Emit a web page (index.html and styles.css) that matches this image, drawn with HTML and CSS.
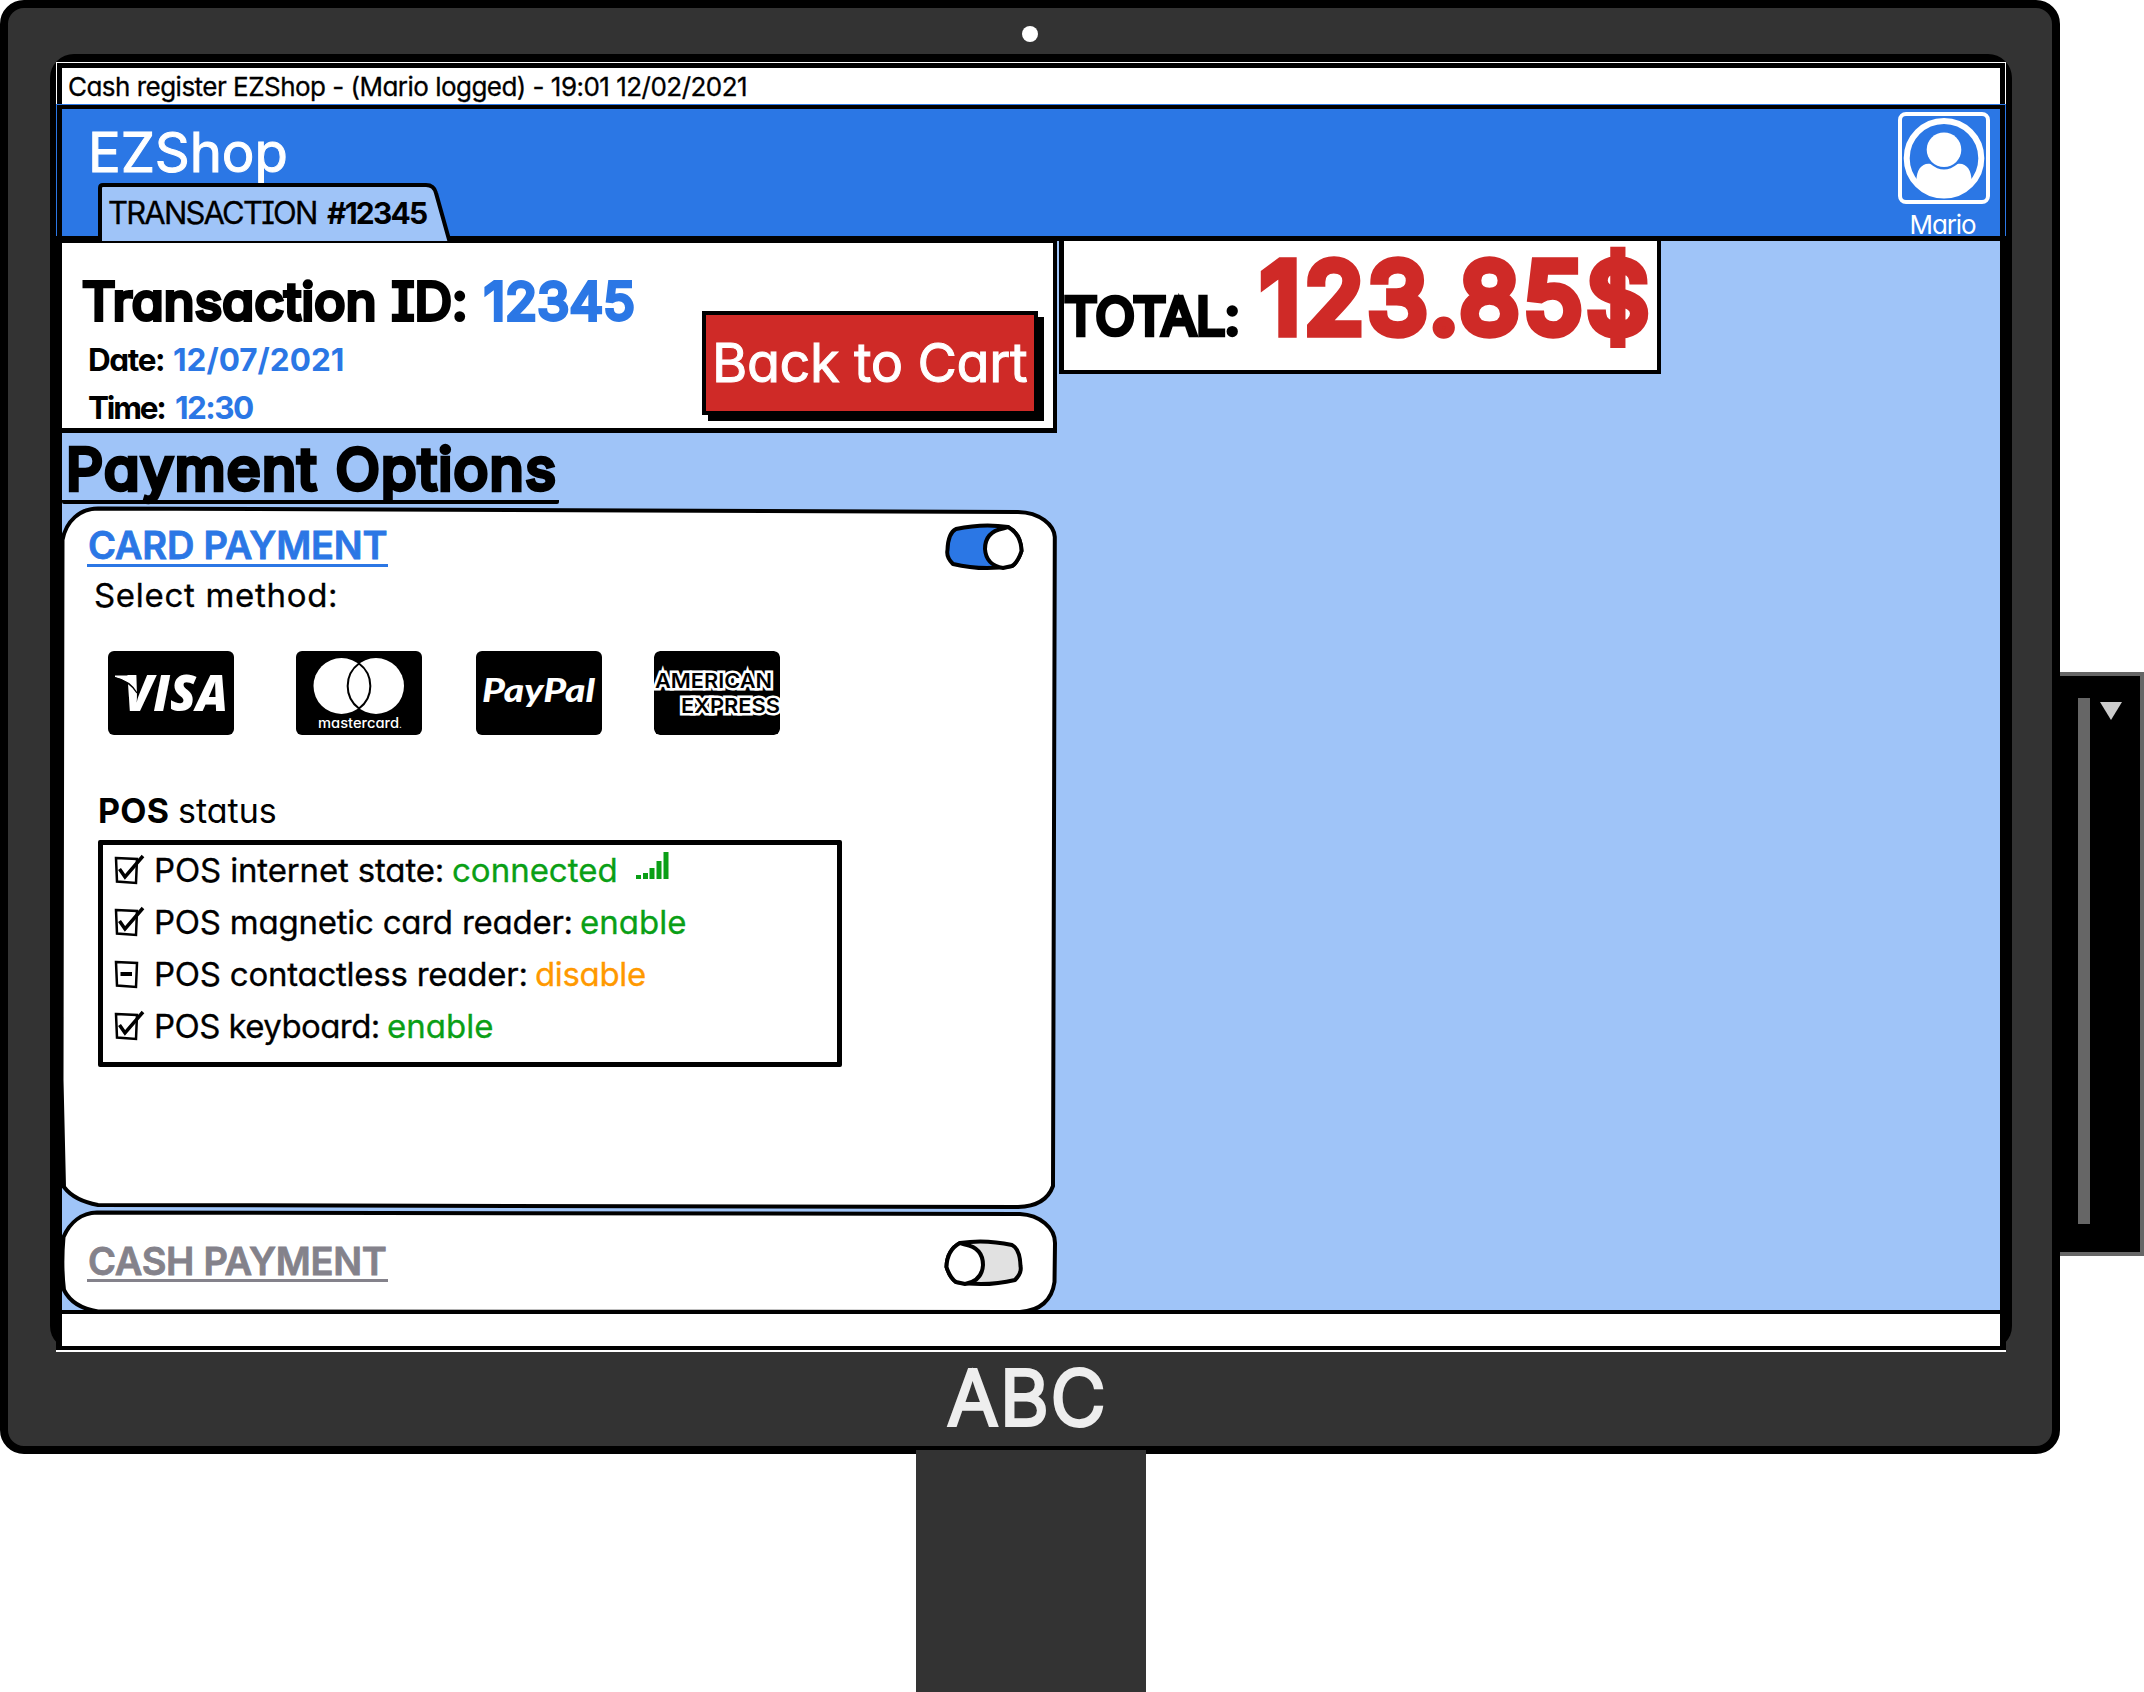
FILE: index.html
```
<!DOCTYPE html>
<html lang="en">
<head>
<meta charset="utf-8">
<title>EZShop cash register</title>
<link rel="stylesheet" href="styles.css">
</head>
<body>
<div class="station">
  <div class="monitor">
    <div class="camera-strip"><span class="camera"></span></div>
    <div class="bezel">
      <div class="screen">
        <div class="title-bar"><span class="t title">Cash register EZShop - (Mario logged) - 19:01 12/02/2021</span></div>
        <header class="header">
          <div class="brand-area">
            <div class="t brand">EZShop</div>
            <div class="tab">
              <svg class="tab-shape" width="356" height="58" viewBox="0 0 356 58"><path d="M2 60V5Q2 2 5 2H328Q336 2 338 10L352 60" fill="#9fc4f8" stroke="#000" stroke-width="4"/></svg>
              <span class="t tab-label">TRANSACTION</span><span class="t tab-number">#12345</span>
            </div>
          </div>
          <div class="user">
            <svg class="avatar" width="92" height="92" viewBox="0 0 92 92" fill="#fff"><rect x="2" y="2" width="88" height="88" rx="6" fill="none" stroke="#fff" stroke-width="4"/><circle cx="46" cy="46.3" r="37.3" fill="none" stroke="#fff" stroke-width="6"/><circle cx="46" cy="37.7" r="17.3"/><path d="M18.500 70C18 58 24 50.500 32.500 52Q46 63 59.500 52C68 50.500 74 58 73.500 70A37 37 0 0 1 18.500 70Z"/></svg>
            <div class="t user-name">Mario</div>
          </div>
        </header>
        <main class="main">
          <div class="left">
            <section class="transaction">
              <div class="info">
                <div class="id-line"><span class="t id-label">Transaction ID:</span><span class="t id-value">12345</span></div>
                <div class="meta-line"><span class="t date-label">Date:</span><span class="t date-value">12/07/2021</span></div>
                <div class="meta-line"><span class="t time-label">Time:</span><span class="t time-value">12:30</span></div>
              </div>
              <button class="back"><span class="t back-label">Back to Cart</span></button>
            </section>
            <h2 class="options-title"><span class="t options-text">Payment Options</span></h2>
            <section class="card-panel">
              <svg class="outline" width="1000" height="708" viewBox="60 505 1000 708"><path d="M98 508.500L1018 512C1040 512.500 1054 525 1054.800 537L1053 1186C1048 1200 1035 1206.500 1018 1207L98 1205C82 1202 70 1195 64 1187L61.500 1080L62.500 540C66 521 80 508.500 98 508.500Z" fill="#fff" stroke="#000" stroke-width="4"/></svg>
              <div class="panel-head">
                <h3 class="panel-title card-title"><span class="t card-text">CARD PAYMENT</span></h3>
                <svg class="toggle" width="82" height="50" viewBox="943 522 82 50" stroke="#000" stroke-width="4" stroke-linejoin="round"><path d="M956 529Q983 523 1008 527Q1021 534 1021.500 551Q1018 562 1012 566Q982 571 953 564Q946 557 947.500 550Q948 533 956 529Z" fill="#2b77e5"/><path d="M1003 528.500Q985 532 985 549Q986 565 1003 568L1012 566Q1018 562 1021.500 551Q1021 534 1008 527Z" fill="#fff"/></svg>
              </div>
              <div class="t select">Select method:</div>
              <div class="methods">
                <svg class="method" width="126" height="84" viewBox="0 0 126 84"><rect width="126" height="84" rx="6"/><text x="16" y="60" font-family="Open Sans" font-weight="800" font-style="italic" font-size="50" fill="#fff" textLength="104" lengthAdjust="spacingAndGlyphs">VISA</text><path d="M7 24.500H22L28 40Q20 29 7 26Z" fill="#fff"/><path d="M7 27Q22 30 29 42" fill="none" stroke="#000" stroke-width="1.300"/></svg>
                <svg class="method" width="126" height="84" viewBox="0 0 126 84"><rect width="126" height="84" rx="6"/><g fill="#fff"><circle cx="45.500" cy="35" r="28"/><circle cx="80" cy="35" r="28"/></g><path d="M63 12.500A28 28 0 0 1 63 57.500A28 28 0 0 1 63 12.500Z" fill="#fff" stroke="#000" stroke-width="2"/><text x="22" y="76.500" font-family="Inter" font-weight="500" font-size="14" fill="#fff" textLength="84" lengthAdjust="spacingAndGlyphs">mastercard<tspan font-size="9">.</tspan></text></svg>
                <svg class="method" width="126" height="84" viewBox="0 0 126 84"><rect width="126" height="84" rx="6"/><text x="6" y="51" font-family="Lato" font-weight="900" font-style="italic" font-size="33" fill="#fff" textLength="113" lengthAdjust="spacingAndGlyphs">PayPal</text></svg>
                <svg class="method amex" width="126" height="84" viewBox="0 0 126 84"><rect width="126" height="84" rx="6"/><g font-family="Inter" font-weight="600" font-size="20.500" fill="#000" stroke="#fff" stroke-width="5" paint-order="stroke"><text x="1" y="37" textLength="117" lengthAdjust="spacingAndGlyphs">AMERICAN</text><text x="27" y="62" textLength="99" lengthAdjust="spacingAndGlyphs">EXPRESS</text></g></svg>
              </div>
              <div class="status-title"><b class="t pos">POS</b><span class="t status-word">status</span></div>
              <ul class="status">
                <li><svg class="box" width="40" height="34" viewBox="0 0 40 34"><path class="frame" d="M2 5L23 6L22 30L3 28.500Z"/><path class="tick" d="M5.500 16L11 24L29 3"/></svg><span class="t r1">POS internet state:</span><span class="t ok v1">connected</span><svg class="signal" width="33" height="28" viewBox="0 0 33 28" fill="#0a9f16"><path d="M0 23h5v4H0zM7 21h5v6H7zM13.500 16h5v11h-5zM20.500 9h5v18h-5zM27.500 0h5v27h-5z"/></svg></li>
                <li><svg class="box" width="40" height="34" viewBox="0 0 40 34"><path class="frame" d="M2 5L23 6L22 30L3 28.500Z"/><path class="tick" d="M5.500 16L11 24L29 3"/></svg><span class="t r2">POS magnetic card reader:</span><span class="t ok v2">enable</span></li>
                <li><svg class="box" width="40" height="34" viewBox="0 0 40 34"><path class="frame" d="M2 5L23 6L22 30L3 28.500Z"/><path class="dash" d="M6.500 17H18"/></svg><span class="t r3">POS contactless reader:</span><span class="t warn v3">disable</span></li>
                <li><svg class="box" width="40" height="34" viewBox="0 0 40 34"><path class="frame" d="M2 5L23 6L22 30L3 28.500Z"/><path class="tick" d="M5.500 16L11 24L29 3"/></svg><span class="t r4">POS keyboard:</span><span class="t ok v4">enable</span></li>
              </ul>
            </section>
            <section class="cash-panel">
              <svg class="outline" width="1000" height="108" viewBox="60 1208 1000 108"><path d="M97 1212.500L1020 1214C1040 1215 1055 1228 1055 1243L1054.500 1282C1052 1300 1040 1311 1020 1312L98 1311.500C82 1309 70 1302 64 1290Q61 1265 63.500 1237C70 1222 82 1213 97 1212.500Z" fill="#fff" stroke="#000" stroke-width="4"/></svg>
              <div class="panel-head">
                <h3 class="panel-title cash-title"><span class="t cash-text">CASH PAYMENT</span></h3>
                <svg class="toggle flip" width="82" height="50" viewBox="943 522 82 50" stroke="#000" stroke-width="4" stroke-linejoin="round"><path d="M956 529Q983 523 1008 527Q1021 534 1021.500 551Q1018 562 1012 566Q982 571 953 564Q946 557 947.500 550Q948 533 956 529Z" fill="#e1e1e1"/><path d="M1003 528.500Q985 532 985 549Q986 565 1003 568L1012 566Q1018 562 1021.500 551Q1021 534 1008 527Z" fill="#fff"/></svg>
              </div>
            </section>
          </div>
          <section class="total"><span class="t total-label">TOTAL:</span><span class="t price">123.85$</span></section>
        </main>
        <footer class="footer"></footer>
      </div>
    </div>
    <div class="maker"><span class="t maker-name">ABC</span></div>
  </div>
  <div class="reader"><span class="slot"></span><svg class="arrow" width="22" height="18" viewBox="0 0 22 18"><path d="M0 0H22L11 18Z" fill="#ccc"/></svg></div>
</div>
<div class="stand"></div>
</body>
</html>
```
FILE: styles.css
```
* { box-sizing: border-box; }
body {
  margin: 0;
  height: 1692px;
  overflow: hidden;
  background: #fff;
  color: #000;
  font-family: Inter, "Liberation Sans", sans-serif;
  font-feature-settings: "cv11", "cv08";
}
h2, h3, ul { margin: 0; padding: 0; font-size: inherit; font-weight: inherit; }
svg { display: block; flex: none; }
.t { display: block; flex: none; white-space: nowrap; stroke-linejoin: round; }

/* hardware */
.station { display: flex; align-items: flex-start; height: 1454px; }
.monitor {
  flex: none;
  width: 2060px;
  height: 1454px;
  border: 8px solid #000;
  border-radius: 24px;
  background: #333;
}
.camera-strip { display: flex; justify-content: center; height: 46px; padding-top: 18px; }
.camera { width: 16px; height: 16px; border-radius: 50%; background: #fff; }
.bezel {
  width: 1962px;
  height: 1296px;
  margin-left: 42px;
  padding: 8px 6px 0;
  border-radius: 24px;
  background: #000;
}
.maker { display: flex; justify-content: center; height: 96px; padding-right: 5px; }
.maker-name {
  line-height: 95px;
  font-size: 75px;
  font-weight: 300;
  letter-spacing: 2px;
  color: #eee;
  -webkit-text-stroke: 4px #eee;
}
.reader {
  display: flex;
  align-items: flex-start;
  width: 84px;
  height: 584px;
  margin-top: 672px;
  padding: 22px 0 0 18px;
  border: 4px solid #666;
  border-left: 0;
  background: #000;
}
.slot { width: 12px; height: 526px; background: #666; }
.arrow { margin: 4px 0 0 10px; }
.stand {
  position: relative;
  width: 230px;
  height: 242px;
  margin: -4px 0 0 916px;
  background: #333;
}

/* application window */
.screen { width: 1950px; height: 1290px; background: #000; }
.title-bar {
  height: 42px;
  border: 1px solid #fff;
  border-bottom: 0;
  padding: 5px 5px 0;
  background: linear-gradient(#fff, #fff) content-box, #000;
}
.title { padding-left: 6px; line-height: 38px; font-size: 26px; letter-spacing: -.52px; -webkit-text-stroke: .3px #000; }
.header {
  display: flex;
  justify-content: space-between;
  height: 132px;
  border: 1px solid #2b77e5;
  border-bottom: 0;
  padding: 4px 5px 0;
  color: #fff;
  background: linear-gradient(#2b77e5, #2b77e5) content-box, #000;
}
.brand { margin: 13px 0 0 26px; line-height: 60px; font-size: 54.5px; letter-spacing: -.1px; -webkit-text-stroke: 1px #fff; }
.tab { position: relative; display: flex; height: 58px; margin: 1px 0 0 36px; padding-left: 10px; color: #000; line-height: 60px; font-size: 31px; }
.tab-shape { position: absolute; left: 0; top: 0; }
.tab-label { position: relative; width: 219px; letter-spacing: -1.8px; -webkit-text-stroke: .3px #000; }
.tab-number { position: relative; font-size: 30px; font-weight: 700; letter-spacing: -1.8px; }
.user { width: 92px; margin: 3px 10px 0 0; text-align: center; }
.user-name { line-height: 41px; font-size: 26px; letter-spacing: -1.1px; margin-left: -3px; }
.main {
  display: flex;
  height: 1074px;
  margin: 0 6px;
  border-top: 5px solid #000;
  background: #9fc4f8;
}
.left { width: 995px; }
.footer { position: relative; height: 40px; border: solid #000; border-width: 4px 6px; background: #fff; box-shadow: 0 2px #fff; }

/* transaction summary */
.transaction {
  display: flex;
  justify-content: space-between;
  align-items: flex-start;
  height: 192px;
  border: solid #000;
  border-width: 2px 4px 5px 0;
  background: #fff;
}
.info { padding: 28px 0 0 20px; font-weight: 700; }
.id-line { display: flex; height: 60px; margin-bottom: 8px; line-height: 62px; font-size: 52px; font-weight: 400; }
.id-label { width: 402px; letter-spacing: .2px; -webkit-text-stroke: 4px #000; }
.id-value { letter-spacing: .2px; color: #2b77e5; -webkit-text-stroke: 4px #2b77e5; }
.meta-line { display: flex; height: 40px; margin-bottom: 8px; padding-left: 6px; line-height: 41px; font-size: 31.5px; }
.date-label { width: 85px; letter-spacing: -1.4px; }
.date-value, .time-value { color: #2b77e5; }
.date-value { letter-spacing: 0; }
.time-label { width: 87px; letter-spacing: -2.2px; }
.time-value { letter-spacing: -1.6px; }
.back {
  width: 336px;
  height: 104px;
  margin: 68px 15px 0 0;
  padding: 0 0 0 6px;
  border: 4px solid #000;
  background: #cf2a27;
  box-shadow: 6px 6px #000;
  color: #fff;
  font: inherit;
  font-feature-settings: inherit;
  text-align: left;
}
.back-label { line-height: 96px; font-size: 54px; letter-spacing: -.4px; -webkit-text-stroke: 1px #fff; }
.options-title { width: 497px; height: 71px; margin-bottom: 3px; padding-left: 4px; border-bottom: 4px solid #000; border-radius: 2px; }
.options-text { line-height: 72px; font-size: 58px; font-weight: 400; letter-spacing: 1.3px; -webkit-text-stroke: 4.5px #000; }

/* payment panels */
.card-panel { position: relative; width: 995px; height: 703px; padding-left: 25px; }
.cash-panel { position: relative; z-index: 1; width: 995px; height: 104px; padding-left: 25px; }
.outline { position: absolute; left: -2px; top: -2px; }
.panel-head { position: relative; display: flex; justify-content: space-between; align-items: flex-start; }
.card-panel .panel-head { height: 63px; padding: 15px 32px 0 0; }
.cash-panel .panel-head { padding: 28px 32px 0 0; }
.panel-title { width: 301px; height: 45px; padding: 4px 0 0 1px; border-bottom: 3px solid; font-size: 38px; font-weight: 600; line-height: 38px; }
.card-title { color: #2b77e5; }
.card-text { letter-spacing: -.2px; -webkit-text-stroke: .8px #2b77e5; }
.cash-title { height: 44px; color: #84828b; }
.cash-text { letter-spacing: -.3px; -webkit-text-stroke: .8px #84828b; }
.flip { transform: scaleX(-1); }
.select { position: relative; padding-left: 7px; line-height: 50px; font-size: 33px; letter-spacing: .7px; -webkit-text-stroke: .3px #000; }
.methods { position: relative; display: flex; margin-top: 31px; padding-left: 21px; height: 84px; }
.method:nth-child(2) { margin-left: 62px; }
.method:nth-child(3) { margin-left: 54px; }
.method:nth-child(4) { margin-left: 52px; }
.method text { font-feature-settings: "cv11"; }
.amex { overflow: hidden; border-radius: 6px; }
.status-title { position: relative; display: flex; margin-top: 51px; padding-left: 11px; line-height: 50px; font-size: 34px; }
.pos { width: 80px; letter-spacing: .2px; }
.status { position: relative; width: 744px; height: 227px; margin: 4px 0 0 11px; border: 5px solid #000; border-radius: 2px; list-style: none; }
.status li { display: flex; align-items: center; height: 52px; padding-left: 11px; line-height: 52px; font-size: 33px; -webkit-text-stroke: .3px; }
.status li:first-child { margin-top: -1px; }
.box { width: 40px; fill: none; stroke: #000; }
.frame { stroke-width: 2.5; }
.tick { stroke-width: 3.5; }
.dash { stroke-width: 4; }
.ok { color: #0a9f16; }
.warn { color: #ff9900; }
.r1 { width: 298px; letter-spacing: -.15px; }
.r2 { width: 426px; letter-spacing: -.24px; }
.r3 { width: 381px; letter-spacing: -.24px; }
.r4 { width: 233px; letter-spacing: -.58px; }
.v3 { letter-spacing: -.34px; }
.signal { margin: -8px 0 0 18px; }

/* amount due */
.total {
  display: flex;
  align-items: flex-start;
  width: 602px;
  height: 133px;
  margin-left: 2px;
  border: solid #000;
  border-width: 0 4px 4px 5px;
  background: #fff;
}
.total-label { width: 197px; margin: 46px 0 0 0; line-height: 60px; font-size: 52px; font-weight: 400; letter-spacing: -.8px; -webkit-text-stroke: 4.5px #000; }
.price { margin-top: 6px; line-height: 101px; font-size: 97px; font-weight: 400; letter-spacing: 4.1px; color: #cf2a27; -webkit-text-stroke: 9.5px #cf2a27; }
```
